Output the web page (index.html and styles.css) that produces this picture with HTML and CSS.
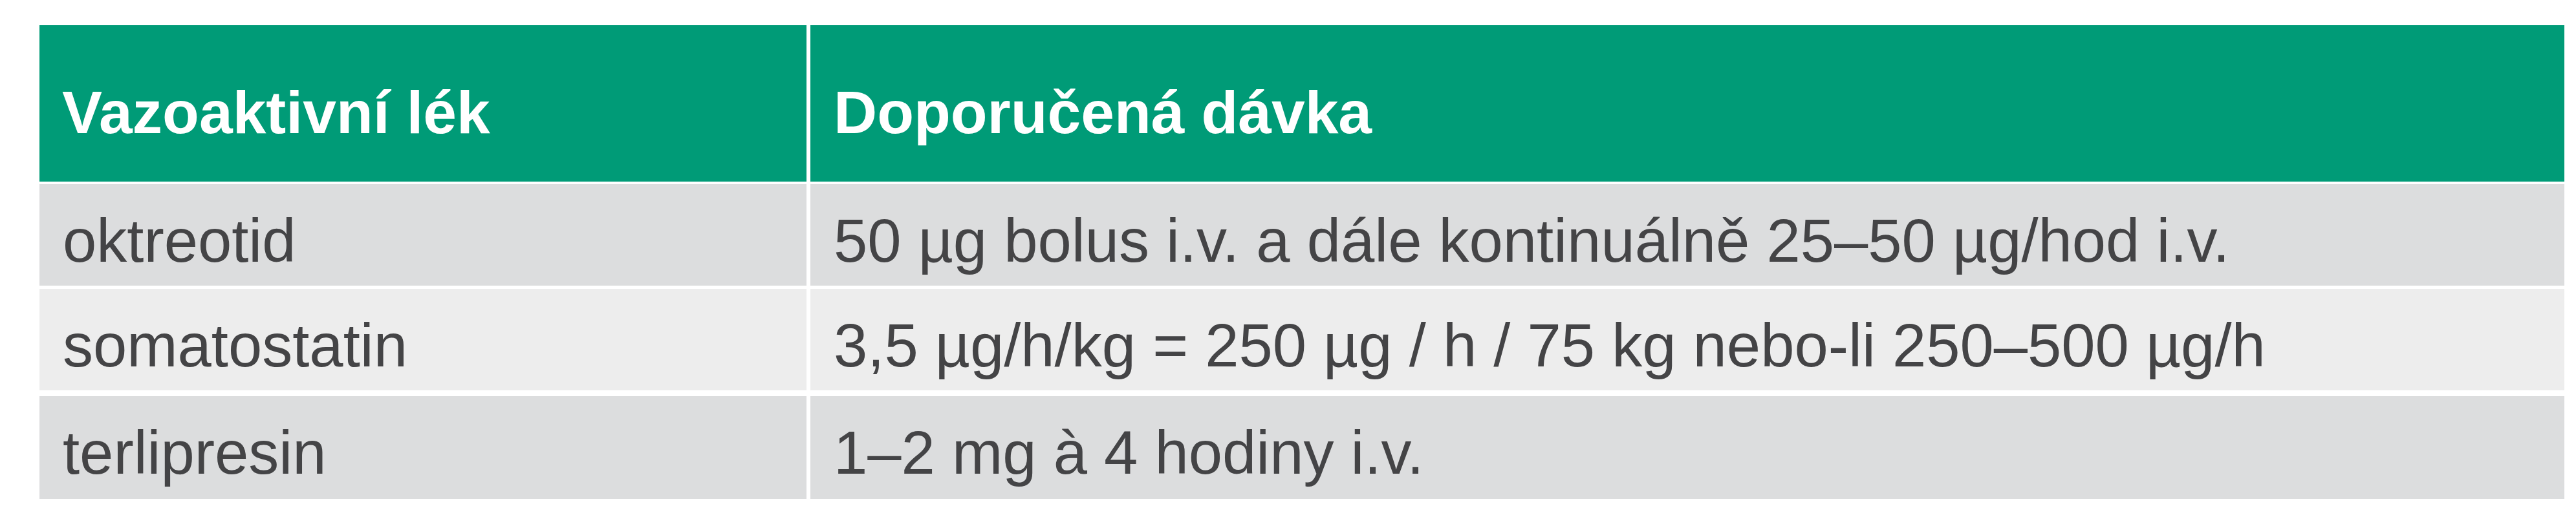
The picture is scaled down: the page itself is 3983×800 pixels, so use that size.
FILE: index.html
```html
<!DOCTYPE html>
<html lang="cs">
<head>
<meta charset="utf-8">
<title>Vazoaktivní léky</title>
<link rel="stylesheet" href="styles.css">
</head>
<body>
<div class="page">
  <div class="table">
    <div class="row head">
      <div class="cell c1">Vazoaktivní lék</div>
      <div class="cell c2">Doporučená dávka</div>
    </div>
    <div class="row r1 dark">
      <div class="cell c1">oktreotid</div>
      <div class="cell c2">50 µg bolus i.v. a dále kontinuálně 25–50 µg/hod i.v.</div>
    </div>
    <div class="row r2 light">
      <div class="cell c1">somatostatin</div>
      <div class="cell c2">3,5 µg/h/kg = 250 µg / h / 75 kg nebo-li 250–500 µg/h</div>
    </div>
    <div class="row r3 dark">
      <div class="cell c1">terlipresin</div>
      <div class="cell c2">1–2 mg à 4 hodiny i.v.</div>
    </div>
  </div>
</div>
</body>
</html>
```

FILE: styles.css
```css
html, body {
  margin: 0;
  padding: 0;
  background: #ffffff;
}
.page {
  width: 3983px;
  height: 800px;
  box-sizing: border-box;
  padding: 39px 0 0 61px;
  font-family: "Liberation Sans", Arial, sans-serif;
}
.table {
  width: 3904px;
  display: flex;
  flex-direction: column;
}
.row {
  display: grid;
  grid-template-columns: 1186px 2712px;
  column-gap: 6px;
}
.cell {
  box-sizing: border-box;
  padding-left: 36px;
  white-space: nowrap;
}
.head .cell {
  background: #009b77;
  color: #ffffff;
  font-weight: bold;
  font-size: 93px;
  line-height: 107px;
  height: 242px;
  padding-top: 82px;
}
.head .c1 { padding-left: 35px; }
.r1 { margin-top: 4px; }
.r2 { margin-top: 5px; }
.r3 { margin-top: 9px; }
.r1 .cell, .r2 .cell { height: 157px; }
.r3 .cell { height: 159px; }
.dark .cell, .light .cell {
  font-size: 94px;
  line-height: 108px;
  padding-top: 34px;
  color: #444446;
}
.dark .cell { background: #dcddde; }
.light .cell { background: #ededed; }
```
